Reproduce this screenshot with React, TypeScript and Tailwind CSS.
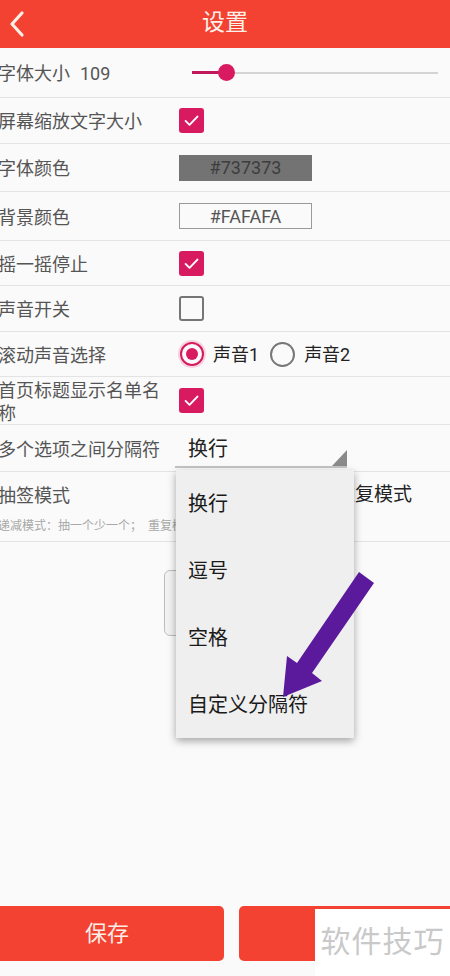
import React from "react";

const Check = () => (
  <div className="w-[25px] h-[25px] rounded-[3px] bg-[#d81b60] flex items-center justify-center">
    <svg width="19" height="19" viewBox="0 0 24 24">
      <path d="M4.5 12.5l5 5L19.5 7" stroke="white" strokeWidth="2.4" fill="none" strokeLinecap="round" strokeLinejoin="round" />
    </svg>
  </div>
);

const Uncheck = () => (
  <div className="w-[25px] h-[25px] rounded-[3px] border-[2.5px] border-[#767676] bg-transparent" />
);

const RadioOn = () => (
  <div className="w-[28px] h-[28px] rounded-full bg-[#f7d3e0] flex items-center justify-center">
    <div className="w-[24px] h-[24px] rounded-full border-[2.5px] border-[#d81b60] flex items-center justify-center bg-[#fafafa]">
      <div className="w-[12px] h-[12px] rounded-full bg-[#d81b60]" />
    </div>
  </div>
);

const RadioOff = () => (
  <div className="w-[28px] h-[28px] flex items-center justify-center">
    <div className="w-[25px] h-[25px] rounded-full border-[2px] border-[#777]" />
  </div>
);

const Row = ({ h, label, children }: { h: string; label: React.ReactNode; children?: React.ReactNode }) => (
  <div className={`flex items-center border-b border-[#e3e3e3] ${h}`}>
    <div className="-ml-[2px] w-[181px] shrink-0 pt-[2px]">
      <div className="max-w-[168px] text-[18px] leading-[23px] text-[#555]">{label}</div>
    </div>
    <div className="flex items-center flex-1">{children}</div>
  </div>
);

export default function App() {
  return (
    <div className="relative w-[450px] h-[976px] overflow-hidden bg-[#fafafa] flex flex-col font-['Roboto','Noto_Sans_CJK_SC',sans-serif]">
      {/* header */}
      <div className="h-[48px] shrink-0 bg-[#f44232] flex items-center relative">
        <svg className="absolute left-[7px] top-[10px]" width="20" height="28" viewBox="0 0 20 28">
          <path d="M15 3L5 14l10 11" stroke="#fbeee6" strokeWidth="3.2" fill="none" strokeLinecap="round" strokeLinejoin="round" />
        </svg>
        <div className="flex-1 text-center text-[23px] text-[#fbf1ea] leading-none -mt-[3px]">设置</div>
      </div>

      <Row h="h-[50px]" label={<span>字体大小<span className="ml-[10px]">109</span></span>}>
        <div className="relative ml-[13px] w-[246px] h-[16px] flex items-center">
          <div className="h-[2px] w-full bg-[#d4d4d4]" />
          <div className="absolute left-0 h-[3px] w-[34px] bg-[#c2185b]" />
          <div className="absolute left-[26px] w-[17px] h-[17px] rounded-full bg-[#d81b60]" />
        </div>
      </Row>
      <Row h="h-[46px]" label="屏幕缩放文字大小">
        <Check />
      </Row>
      <Row h="h-[48px]" label="字体颜色">
        <div className="w-[133px] h-[26px] bg-[#737373] flex items-center justify-center text-[18px] text-[#3d3d3d]">#737373</div>
      </Row>
      <Row h="h-[49px]" label="背景颜色">
        <div className="w-[133px] h-[26px] border border-[#9a9a9a] flex items-center justify-center text-[18px] text-[#555]">#FAFAFA</div>
      </Row>
      <Row h="h-[45px]" label="摇一摇停止">
        <Check />
      </Row>
      <Row h="h-[46px]" label="声音开关">
        <Uncheck />
      </Row>
      <Row h="h-[45px]" label="滚动声音选择">
        <div className="-ml-[1px] flex items-center">
          <RadioOn />
          <span className="ml-[7px] text-[18px] text-[#222]">声音1</span>
          <div className="ml-[9px]">
            <RadioOff />
          </div>
          <span className="ml-[8px] text-[18px] text-[#222]">声音2</span>
        </div>
      </Row>
      <Row h="h-[48px]" label="首页标题显示名单名称">
        <Check />
      </Row>
      <Row h="h-[47px]" label="多个选项之间分隔符">
        <div className="-ml-[4px] relative w-[172px] h-[39px] border-b-[2px] border-[#c4c4c4] flex items-center">
          <span className="ml-[13px] mt-[4px] text-[20px] text-[#222]">换行</span>
          <svg className="absolute right-0 bottom-0" width="15" height="16" viewBox="0 0 15 16">
            <polygon points="15,0 15,16 0,16" fill="#8a8a8a" />
          </svg>
        </div>
      </Row>
      <div className="h-[70px] border-b border-[#e3e3e3] flex flex-col">
        <div className="flex items-center mt-[9px]">
          <div className="-ml-[2px] w-[181px] shrink-0 text-[18px] leading-[23px] text-[#555]">抽签模式</div>
          <div className="flex items-center">
            <RadioOn />
            <span className="ml-[7px] text-[19px] text-[#222]">递减模式</span>
            <div className="ml-[9px]">
              <RadioOff />
            </div>
            <span className="ml-[9px] text-[19px] text-[#222]">重复模式</span>
          </div>
        </div>
        <div className="-ml-[2px] mt-[7px] text-[12px] text-[#a8a8a8] whitespace-nowrap">递减模式：抽一个少一个；&nbsp;&nbsp;重复模式：抽完可以重复抽</div>
      </div>

      <div className="ml-[164px] mt-[28px] w-[150px] h-[66px] border border-[#bdbdbd] rounded-[6px] bg-[#f2f2f2]" />

      <div className="flex-1" />

      <div className="h-[55px] mb-[15px] flex gap-[15px] shrink-0">
        <div className="w-[228px] shrink-0 -ml-[4px] pr-[6px] rounded-[5px] bg-[#f44232] flex items-center justify-center text-[22px] text-[#fbeee6]">保存</div>
        <div className="w-[230px] shrink-0 rounded-[5px] bg-[#f44232]" />
      </div>

      {/* watermark */}
      <div className="absolute left-[315px] top-[909px] w-[135px] h-[67px] bg-white flex items-center justify-center">
        <span className="text-[30px] text-[#c9c9c9] tracking-[1px] -mt-[3px]">软件技巧</span>
      </div>

      {/* dropdown */}
      <div className="absolute left-[176px] top-[470px] w-[178px] h-[268px] bg-[#efefef] shadow-[0_3px_8px_rgba(0,0,0,0.35)] flex flex-col">
        {["换行", "逗号", "空格", "自定义分隔符"].map((t) => (
          <div key={t} className="h-[67px] flex items-center pl-[12px] text-[20px] text-[#1a1a1a]">
            {t}
          </div>
        ))}
      </div>

      {/* arrow annotation */}
      <svg className="absolute left-0 top-0 pointer-events-none" width="450" height="976" viewBox="0 0 450 976">
        <polygon points="359,572 374,583 312,673 322,681 283,697 287,656 297,663" fill="#5b1a9c" />
      </svg>
    </div>
  );
}
